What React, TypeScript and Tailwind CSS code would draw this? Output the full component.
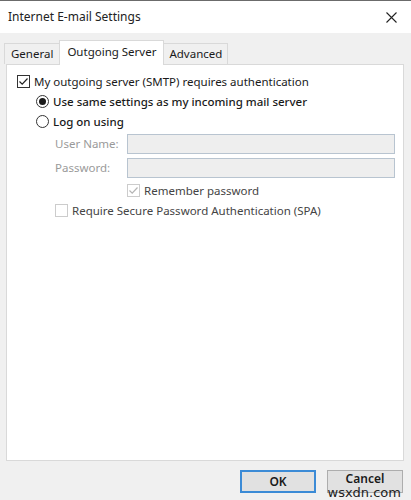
import React from "react";

function Check({ disabled = false, checked = false }: { disabled?: boolean; checked?: boolean }) {
  const border = disabled ? "#cccccc" : "#333333";
  const mark = disabled ? "#b5b5b5" : "#222222";
  return (
    <svg width="13" height="13" viewBox="0 0 13 13" className="shrink-0">
      <rect x="0.5" y="0.5" width="12" height="12" fill="#ffffff" stroke={border} />
      {checked && <path d="M2.5 6.5 L5.2 9.2 L10.5 3.5" fill="none" stroke={mark} strokeWidth="1.2" />}
    </svg>
  );
}

function Radio({ checked = false }: { checked?: boolean }) {
  return (
    <svg width="13" height="13" viewBox="0 0 13 13" className="shrink-0">
      <circle cx="6.5" cy="6.5" r="6" fill="#ffffff" stroke="#333333" />
      {checked && <circle cx="6.5" cy="6.5" r="3.5" fill="#1a1a1a" />}
    </svg>
  );
}

export default function App() {
  return (
    <div
      className="w-[411px] h-[500px] bg-[#f0f0f0] flex flex-col overflow-hidden relative text-[#1a1a1a]"
      style={{ fontFamily: '"Noto Sans", "Open Sans", sans-serif' }}
    >
      <div className="h-[1px] bg-[#6b6b6b]" />
      <div className="h-[32px] bg-white flex items-center justify-between pl-[8px] pr-[14px]">
        <span className="text-[12px] text-[#222]">Internet E-mail Settings</span>
        <svg width="11" height="11" viewBox="0 0 11 11">
          <path d="M0.5 0.5 L10.5 10.5 M10.5 0.5 L0.5 10.5" stroke="#222" strokeWidth="1.1" />
        </svg>
      </div>
      <div className="flex items-end pl-[4px] pt-[5px] h-[31px] text-[11.5px]">
        <div className="h-[21px] px-[6px] flex items-center border border-b-0 border-[#d9d9d9] bg-[#f0f0f0]">General</div>
        <div className="h-[25px] px-[7px] flex items-start pt-[2px] border border-b-0 border-[#d9d9d9] bg-white -mx-[1px] relative z-10 -mb-[1px]">Outgoing Server</div>
        <div className="h-[21px] px-[5px] flex items-center border border-b-0 border-[#d9d9d9] bg-[#f0f0f0]">Advanced</div>
      </div>
      <div className="mx-[6px] mr-[7px] h-[397px] bg-white border border-[#d9d9d9] flex flex-col text-[11.5px]">
        <div className="flex items-center gap-[4px] pl-[10px] mt-[10px] h-[13px]">
          <Check checked />
          <span>My outgoing server (SMTP) requires authentication</span>
        </div>
        <div className="flex items-center gap-[4px] pl-[29px] mt-[7px] h-[13px] font-medium">
          <Radio checked />
          <span>Use same settings as my incoming mail server</span>
        </div>
        <div className="flex items-center gap-[4px] pl-[29px] mt-[7px] h-[13px] font-medium">
          <Radio />
          <span>Log on using</span>
        </div>
        <div className="flex items-center pl-[48px] mt-[6px] h-[20px] text-[#9a9a9a]">
          <span className="w-[72px]">User Name:</span>
          <div className="flex-1 h-[20px] mr-[8px] bg-[#eeeeee] border border-[#b8c4d0]" />
        </div>
        <div className="flex items-center pl-[48px] mt-[4px] h-[20px] text-[#9a9a9a]">
          <span className="w-[72px]">Password:</span>
          <div className="flex-1 h-[20px] mr-[8px] bg-[#eeeeee] border border-[#b8c4d0]" />
        </div>
        <div className="flex items-center gap-[4px] pl-[120px] mt-[6px] h-[13px] text-[#444]">
          <Check checked disabled />
          <span>Remember password</span>
        </div>
        <div className="flex items-center gap-[4px] pl-[48px] mt-[7px] h-[13px] text-[#444]">
          <Check disabled />
          <span>Require Secure Password Authentication (SPA)</span>
        </div>
      </div>
      <div className="flex justify-end gap-[11px] pr-[8px] mt-[9px]">
        <div className="w-[76px] h-[23px] border-2 border-[#3c8bd6] bg-[#e1e1e1] flex items-center justify-center text-[12px] leading-[14px] font-semibold">OK</div>
        <div className="w-[76px] h-[23px] border border-[#adadad] bg-[#e1e1e1] flex items-start pt-[1px] justify-center text-[12px] leading-[13px] font-semibold">Cancel</div>
      </div>
      <span
        className="absolute right-[10px] bottom-[1px] text-[13px] leading-[12px] text-[#222]"
        style={{ fontFamily: '"DejaVu Sans", sans-serif' }}
      >
        wsxdn.com
      </span>
    </div>
  );
}
